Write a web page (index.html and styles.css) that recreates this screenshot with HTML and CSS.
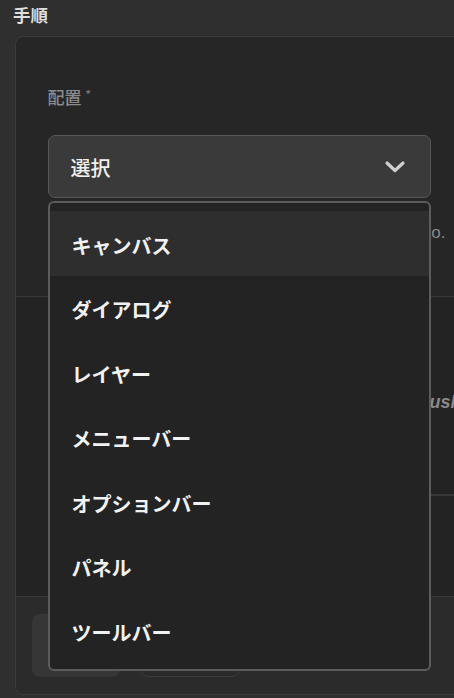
FILE: index.html
```html
<!DOCTYPE html>
<html lang="ja">
<head>
<meta charset="utf-8">
<title>手順</title>
<link rel="stylesheet" href="styles.css">
</head>
<body>
<div class="page">
  <h2 class="title">手順</h2>
  <div class="card">
    <div class="section first">
      <div class="label">配置 <span class="req">*</span></div>
      <div class="field">
        <div class="select">
          <span class="select-value">選択</span>
          <svg class="chev" width="22" height="14" viewBox="0 0 22 14"><polyline points="3,3 11,10.5 19,3" fill="none" stroke="#cfcfcf" stroke-width="3.2" stroke-linecap="round" stroke-linejoin="round"/></svg>
        </div>
        <ul class="menu">
          <li class="item active">キャンバス</li>
          <li class="item">ダイアログ</li>
          <li class="item">レイヤー</li>
          <li class="item">メニューバー</li>
          <li class="item">オプションバー</li>
          <li class="item">パネル</li>
          <li class="item">ツールバー</li>
        </ul>
      </div>
      <div class="hint"><span>Where the step happens in Photo.</span></div>
    </div>
    <div class="section second">
      <div class="clip"><div class="placeholder">Brush</div></div>
      <div class="inner-line"></div>
    </div>
    <div class="footer">
      <div class="btn primary"></div>
      <div class="btn outline"></div>
    </div>
  </div>
</div>
</body>
</html>
```
FILE: styles.css
```css
html, body {
  margin: 0;
  padding: 0;
}
body {
  background: #2f2f2f;
  width: 454px;
  height: 698px;
  overflow: hidden;
  font-family: "Noto Sans CJK JP", "Liberation Sans", sans-serif;
}
.page {
  display: flex;
  flex-direction: column;
}
.title {
  margin: 0;
  height: 36px;
  padding: 3px 0 0 13px;
  box-sizing: border-box;
  font-size: 17.5px;
  line-height: 24px;
  font-weight: 700;
  color: #dedede;
}
.card {
  margin-left: 15px;
  width: 480px;
  height: 659px;
  box-sizing: border-box;
  border: 1.5px solid #3c3c3c;
  border-radius: 8px;
  background: #262626;
  display: flex;
  flex-direction: column;
  overflow: visible;
}
.section.first {
  height: 260px;
  padding: 45px 0 0 31.5px;
  box-sizing: border-box;
  border-bottom: 1.5px solid #383838;
}
.label {
  font-size: 17px;
  line-height: 24px;
  color: #8a8a8a;
  font-weight: 500;
}
.req {
  font-size: 12px;
  vertical-align: 5px;
  color: #7a7a7a;
}
.field {
  position: relative;
  margin-top: 26px;
  width: 383px;
}
.select {
  height: 63px;
  box-sizing: border-box;
  border: 1.5px solid #575757;
  border-radius: 7px;
  background: #3a3a3a;
  display: flex;
  align-items: center;
  justify-content: space-between;
  padding: 0 24px 0 22px;
}
.select-value {
  font-size: 20px;
  font-weight: 500;
  color: #f0f0f0;
  line-height: 28px;
  padding-top: 2px;
}
.chev {
  display: block;
}
.menu {
  position: absolute;
  left: 0;
  top: 66px;
  width: 383px;
  height: 470px;
  box-sizing: border-box;
  margin: 0;
  padding: 8px 0 0 0;
  list-style: none;
  border: 2px solid #5b5b5b;
  border-radius: 6px;
  background: #232323;
  z-index: 5;
}
.item {
  height: 64.5px;
  box-sizing: border-box;
  display: flex;
  align-items: center;
  padding: 4px 0 0 22px;
  font-size: 20px;
  font-weight: 700;
  color: #f2f2f2;
}
.item.active {
  background: #2e2e2e;
}
.hint {
  margin-top: 22px;
  width: 398px;
  height: 26px;
  display: flex;
  justify-content: flex-end;
  overflow: hidden;
  white-space: nowrap;
  font-family: "Liberation Sans", sans-serif;
  font-size: 17px;
  line-height: 26px;
  color: #8a8a8a;
}
.section.second {
  position: relative;
  height: 300px;
  background: #232323;
  border-bottom: 1.5px solid #383838;
  box-sizing: border-box;
  display: flex;
  flex-direction: column;
}
.clip {
  margin: 92px 0 0 0;
  width: 438px;
  height: 26px;
  overflow: hidden;
  display: flex;
  justify-content: flex-end;
}
.placeholder {
  flex: none;
  width: 72px;
  margin-right: -27.5px;
  font-family: "Liberation Sans", sans-serif;
  font-size: 18px;
  font-style: italic;
  font-weight: 700;
  line-height: 26px;
  color: #8a8a8a;
  white-space: nowrap;
}
.inner-line {
  margin: 79px 0 0 200px;
  height: 1.5px;
  background: #383838;
}
.footer {
  flex: 1;
  background: #2b2b2b;
  border-radius: 0 0 7px 7px;
  display: flex;
  align-items: flex-start;
  gap: 20px;
  padding: 17px 0 0 16px;
  box-sizing: border-box;
}
.btn {
  height: 63px;
  border-radius: 8px;
  box-sizing: border-box;
}
.btn.primary {
  width: 88px;
  background: #363636;
}
.btn.outline {
  width: 100px;
  border: 1.5px solid #3a3a3a;
  background: #2a2a2a;
}
```
